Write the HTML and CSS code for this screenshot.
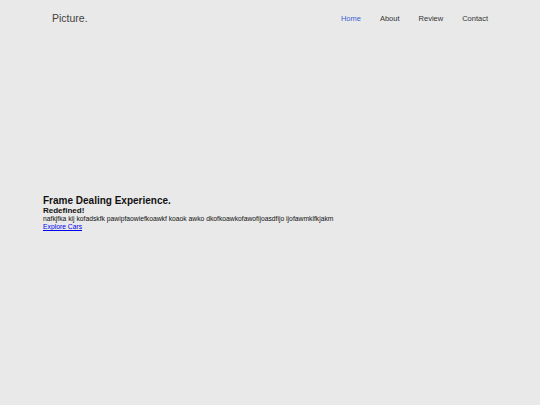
FILE: index.html
```html
<!DOCTYPE html>
<html>
<head>
    <title>Picture.</title>
    <link rel="stylesheet" href="styles.css">
</head>
<body>
    <nav class="navbar">
        <div class="logo">Picture.</div>
        <ul class="nav-links">
            <li><a href="#" class="active">Home</a></li>
            <li><a href="#">About</a></li>
            <li><a href="#">Review</a></li>
            <li><a href="#">Contact</a></li>
        </ul>
    </nav>

    <section class="hero">
        <h1>Frame Dealing Experience.</h1>
        <h2>Redefined!</h2>
        <p>nafkjfka kij kofadskfk pawipfaowiefkoawkf koaok awko dkofkoawkofawofijoasdfijo ijofawmklfkjakm</p>
        <a href="#" class="explore">Explore Cars</a>
    </section>
</body>
</html>
```

FILE: styles.css
```css
body {
    background-color: #e9e9e9;
    margin: 0;
    font-family: "Liberation Sans", Arial, sans-serif;
    height: 405px;
}

.navbar {
    display: flex;
    justify-content: space-between;
    align-items: center;
    height: 35px;
    padding: 0 52px;
    line-height: 10px;
}

.logo {
    font-size: 10.5px;
    color: #444;
}

.nav-links {
    display: flex;
    gap: 19px;
    list-style: none;
    margin: 0;
    padding: 0;
}

.nav-links a {
    font-size: 7.5px;
    color: #333;
    text-decoration: none;
}

.nav-links a.active {
    color: #3b5fd6;
}

.hero {
    padding: 160px 43px 0;
}

.hero h1 {
    font-size: 10px;
    margin: 0;
    color: #111;
    line-height: 11px;
}

.hero h2 {
    font-size: 8px;
    margin: 0;
    color: #111;
    line-height: 9px;
}

.hero p {
    font-size: 6.75px;
    margin: 0;
    color: #111;
    line-height: 8px;
}

.explore {
    display: block;
    font-size: 6.75px;
    color: #0000ee;
    line-height: 8px;
}
```
